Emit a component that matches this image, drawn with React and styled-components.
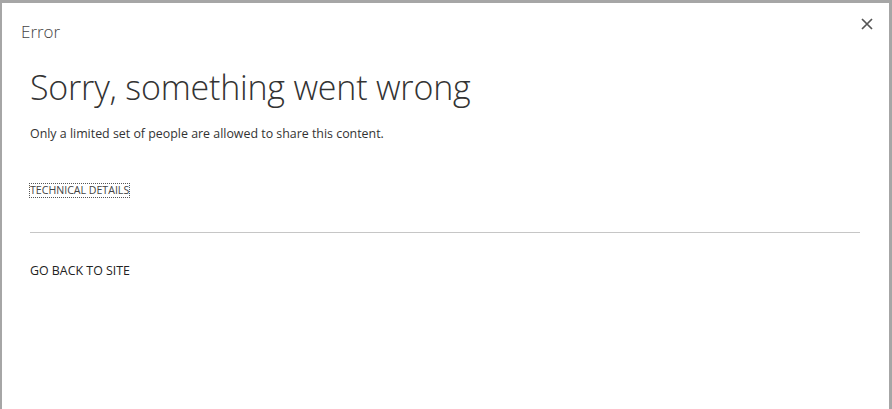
import styled, { createGlobalStyle } from "styled-components";

const GlobalStyle = createGlobalStyle`
  html, body {
    margin: 0;
    padding: 0;
    background: #ffffff;
  }
  body {
    font-family: "Open Sans", "Noto Sans", sans-serif;
  }
`;

const Dialog = styled.div`
  box-sizing: border-box;
  width: 892px;
  height: 409px;
  background: #ffffff;
  border-top: 3px solid #a6a6a6;
  border-left: 2px solid #a6a6a6;
  border-right: 3px solid #a6a6a6;
  display: flex;
  flex-direction: column;
`;

const TitleBar = styled.div`
  display: flex;
  justify-content: space-between;
  align-items: flex-start;
  padding: 18px 15px 0 19px;
  height: 40px;
`;

const Title = styled.div`
  font-size: 17px;
  font-weight: 300;
  color: #444444;
  line-height: 22px;
`;

const CloseButton = styled.button`
  border: none;
  background: transparent;
  padding: 0;
  margin-top: -4px;
  width: 14px;
  height: 14px;
  display: flex;
  align-items: center;
  justify-content: center;
  cursor: pointer;
`;

const Body = styled.div`
  padding: 0 30px 0 28px;
  display: flex;
  flex-direction: column;
`;

const Heading = styled.h1`
  margin: 0;
  font-size: 34px;
  font-weight: 300;
  color: #333333;
  line-height: 52px;
  letter-spacing: -0.2px;
`;

const Message = styled.p`
  margin: 12px 0 0;
  font-size: 12.4px;
  color: #333333;
  line-height: 18px;
`;

const DetailsLink = styled.a`
  align-self: flex-start;
  margin-top: 41px;
  font-size: 10.6px;
  color: #444444;
  text-transform: uppercase;
  text-decoration: none;
  line-height: 13px;
  outline: 1px dotted #555555;
`;

const Divider = styled.hr`
  margin: 35px 0 0;
  border: none;
  border-top: 1px solid #c6c6c6;
  width: 830px;
`;

const BackLink = styled.a`
  align-self: flex-start;
  margin-top: 30px;
  font-size: 12.4px;
  color: #222222;
  text-decoration: none;
  text-transform: uppercase;
  line-height: 16px;
`;

export default function App() {
  return (
    <>
      <GlobalStyle />
      <Dialog>
        <TitleBar>
          <Title>Error</Title>
          <CloseButton aria-label="Close">
            <svg width="12" height="12" viewBox="0 0 12 12">
              <path d="M1 1 L11 11 M11 1 L1 11" stroke="#555" strokeWidth="1.7" />
            </svg>
          </CloseButton>
        </TitleBar>
        <Body>
          <Heading>Sorry, something went wrong</Heading>
          <Message>Only a limited set of people are allowed to share this content.</Message>
          <DetailsLink href="#">Technical Details</DetailsLink>
          <Divider />
          <BackLink href="#">Go back to site</BackLink>
        </Body>
      </Dialog>
    </>
  );
}
